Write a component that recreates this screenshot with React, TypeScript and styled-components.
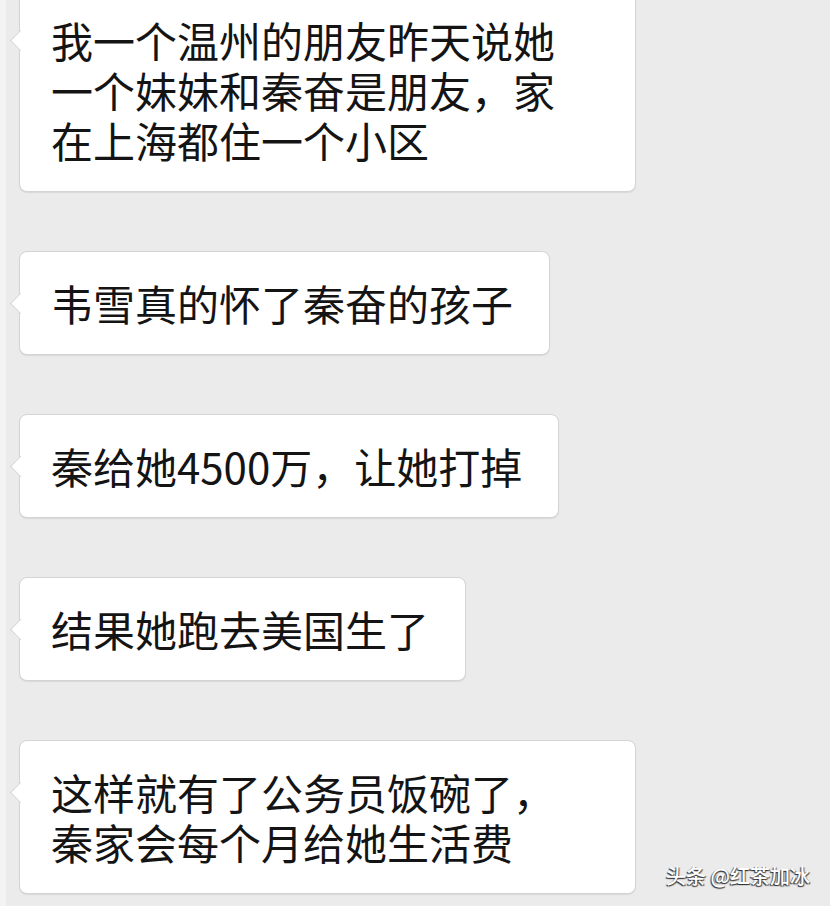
import { createGlobalStyle, styled } from "styled-components";

const Global = createGlobalStyle`
  html, body {
    margin: 0;
    padding: 0;
    background: #ebebeb;
  }
  * {
    box-sizing: border-box;
  }
`;

export default function App() {
  return (
    <>
      <Global />
      <Screen>
        <Thread>
          <Bubble $wide>
            <Line>我一个温州的朋友昨天说她</Line>
            <Line>一个妹妹和秦奋是朋友，家</Line>
            <Line>在上海都住一个小区</Line>
          </Bubble>
          <Bubble>
            <Line>韦雪真的怀了秦奋的孩子</Line>
          </Bubble>
          <Bubble>
            <Line>秦给她4500万，让她打掉</Line>
          </Bubble>
          <Bubble>
            <Line>结果她跑去美国生了</Line>
          </Bubble>
          <Bubble $wide>
            <Line>这样就有了公务员饭碗了，</Line>
            <Line>秦家会每个月给她生活费</Line>
          </Bubble>
        </Thread>
        <Watermark>头条 @红茶加冰</Watermark>
      </Screen>
    </>
  );
}

const Screen = styled.div`
  position: relative;
  width: 830px;
  height: 906px;
  overflow: hidden;
  background: #ebebeb;
  border-left: 6px solid #f3f3f3;
`;

const Thread = styled.div`
  display: flex;
  flex-direction: column;
  align-items: flex-start;
  gap: 59px;
  margin-top: -12px;
  padding-left: 13px;
`;

const Bubble = styled.div<{ $wide?: boolean }>`
  position: relative;
  width: ${(p) => (p.$wide ? "617px" : "auto")};
  padding: 26px 36px 26px 31px;
  background: #ffffff;
  border: 1px solid #d4d4d4;
  border-radius: 8px;
  box-shadow: 0 1px 1px rgba(0, 0, 0, 0.08);

  &::before {
    content: "";
    position: absolute;
    left: -7px;
    top: 44px;
    width: 14px;
    height: 14px;
    background: #ffffff;
    border-left: 1px solid #d4d4d4;
    border-bottom: 1px solid #d4d4d4;
    transform: rotate(45deg);
  }
`;

const Line = styled.div`
  font-family: "Noto Sans CJK SC", "Noto Sans", sans-serif;
  font-size: 42px;
  line-height: 50px;
  color: #141414;
  white-space: nowrap;
`;

const Watermark = styled.div`
  position: absolute;
  right: 20px;
  bottom: 16px;
  font-family: "Noto Sans CJK SC", "Noto Sans", sans-serif;
  font-size: 20px;
  font-weight: 500;
  color: #ffffff;
  text-shadow: -1px 1px 1px #333, 1px 1px 1px #555;
`;
